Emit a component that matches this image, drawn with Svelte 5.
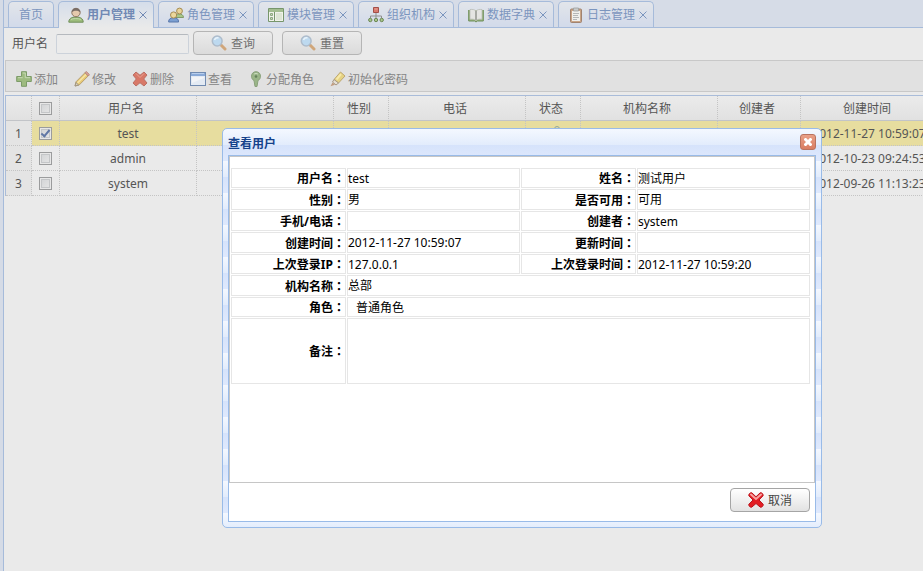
<script>
  const tabs = [
    { title: "用户管理", icon: "user" },
    { title: "角色管理", icon: "group" },
    { title: "模块管理", icon: "module" },
    { title: "组织机构", icon: "org" },
    { title: "数据字典", icon: "book" },
    { title: "日志管理", icon: "log" },
  ];
  let current = $state("用户管理");

  const tools = [
    { text: "添加", icon: "add" },
    { text: "修改", icon: "edit" },
    { text: "删除", icon: "remove" },
    { text: "查看", icon: "view" },
    { text: "分配角色", icon: "pin" },
    { text: "初始化密码", icon: "marker" },
  ];

  const columns = [
    { title: "用户名", size: "wide" },
    { title: "姓名", size: "wide" },
    { title: "性别", size: "narrow" },
    { title: "电话", size: "wide" },
    { title: "状态", size: "narrow" },
    { title: "机构名称", size: "wide" },
    { title: "创建者", size: "middle" },
    { title: "创建时间", size: "wide" },
  ];

  let rows = $state([
    { name: "test", created: "2012-11-27 10:59:07", checked: true },
    { name: "admin", created: "2012-10-23 09:24:53", checked: false },
    { name: "system", created: "2012-09-26 11:13:23", checked: false },
  ]);

  const details = [
    ["用户名", "test", "姓名", "测试用户"],
    ["性别", "男", "是否可用", "可用"],
    ["手机/电话", "", "创建者", "system"],
    ["创建时间", "2012-11-27 10:59:07", "更新时间", ""],
    ["上次登录IP", "127.0.0.1", "上次登录时间", "2012-11-27 10:59:20"],
  ];

  let keyword = $state("");
  let open = $state(true);
</script>

{#snippet icon(name)}
  <svg class="icon" viewBox="0 0 16 16" width="16" height="16" aria-hidden="true">
    {#if name === "user"}
      <path d="M.8 15.2c0-3.500 2.500-5.200 7.200-5.200s7.200 1.700 7.200 5.200z" fill="#9dbd7c" stroke="#718f5b" />
      <path d="M3 12.500c1.500-1.200 8-1.200 10 0" fill="none" stroke="#c4d9ae" />
      <circle cx="8" cy="5.500" r="4.200" fill="#e5c9ad" stroke="#8f7866" />
      <path d="M3.800 5.500C3.500-.5 12.500-.5 12.200 5.500 11 3.300 5 3.300 3.800 5.500z" fill="#796d66" />
    {:else if name === "group"}
      <path d="M7 10.500c0-3 1.500-3.500 4-3.500s4.500 1 4.500 3.500z" fill="#a9c789" stroke="#819b68" />
      <circle cx="11.500" cy="4" r="2.900" fill="#e8d398" stroke="#a68c52" />
      <path d="M.6 15c0-3.200 2-4.300 5-4.300s5 1.100 5 4.300z" fill="#7b9fd2" stroke="#5877aa" />
      <circle cx="5.600" cy="8" r="3.100" fill="#ecd79c" stroke="#a68c52" />
    {:else if name === "module"}
      <path d="M.5 1.500h15v13H.5z" fill="#f0f2ea" stroke="#77966c" />
      <path d="M1 2h14v3H1z" fill="#a3bd90" />
      <path d="M6.500 5v9" stroke="#77966c" />
      <path d="M2.500 6.500h2v2h-2zM2.500 10.500h2v2h-2z" fill="#c6d7b7" stroke="#8fa982" />
      <path d="M8 6h6v7H8z" fill="#dde5d4" />
    {:else if name === "org"}
      <path d="M8 6v3M2.500 11V9h11v2M8 9v2" fill="none" stroke="#8f8f8f" />
      <path d="M5.500.500h5v5h-5z" fill="#d8796d" stroke="#a34f48" />
      <path d="M6.500 1.500h3v1h-3z" fill="#eca99d" />
      <g fill="#a9c58c" stroke="#6c8855">
        <circle cx="2.300" cy="13" r="1.700" /><circle cx="8" cy="13" r="1.700" /><circle cx="13.700" cy="13" r="1.700" />
      </g>
    {:else if name === "book"}
      <path d="M.7 3v11h6l1.300 1 1.300-1h6V3" fill="#9ab47e" stroke="#6f8f5a" />
      <path d="M2 2.500c2.500-.3 4.500 0 6 1.500 1.500-1.500 3.500-1.800 6-1.500v9.700c-2.500-.2-4.500 0-6 1.300-1.500-1.300-3.500-1.500-6-1.300z" fill="#e4e5e2" stroke="#b5b8b1" stroke-width=".7" />
      <path d="M8 4v9" stroke="#a6a9a3" stroke-width="2" />
    {:else if name === "log"}
      <rect x="2.500" y="2" width="11" height="13.500" rx="1" fill="#c9a587" stroke="#a18370" />
      <path d="M4 4h8v10H4z" fill="#f0f0ed" />
      <path d="M5.500 1h5v3h-5z" fill="#c9cbcb" stroke="#9c9f9f" stroke-width=".8" />
      <path d="M5 6.500h6M5 8.500h5M5 10.500h6M5 12.500h4" stroke="#b5b7b7" />
    {:else if name === "add"}
      <path d="M5.500.700h5v4.800h4.800v5h-4.800v4.800h-5v-4.800H.7v-5h4.800z" fill="#9dbb7f" stroke="#7c9b68" />
      <path d="M6.700 2h2.600v4.700H14M2 6.700h4.700" fill="none" stroke="#c6d9b3" />
    {:else if name === "edit"}
      <path d="M1 15l1-4.200L11 1.700l3.200 3.200L5.200 14z" fill="#e9ca75" stroke="#b79f71" />
      <path d="M3.500 12L12 3.500" stroke="#f5e5a9" stroke-width="1.500" />
      <path d="M11 1.700l1.300-1.200 3.200 3.200L14.200 5z" fill="#dba096" stroke="#b68a7e" />
      <path d="M1 15l1-3.500L4.600 14z" fill="#ddd0bb" stroke="#8d867a" stroke-width=".7" />
    {:else if name === "remove"}
      <path d="M4 1l4 3.300L12 1l3 3-3.300 4L15 12l-3 3-4-3.300L4 15l-3-3 3.300-4L1 4z" fill="#d87867" stroke="#bb6f64" stroke-linejoin="round" />
      <path d="M4 2.500l4 4 4-4" fill="none" stroke="#e9a394" />
    {:else if name === "view"}
      <rect x=".500" y="1.500" width="15" height="13" fill="#e3eaf3" stroke="#718bb0" />
      <path d="M1 2h14v3H1z" fill="#8aaad8" />
      <path d="M2 2.500h12" stroke="#b8ceec" />
      <path d="M2 6h12v1L2 12z" fill="#f2f4f7" />
    {:else if name === "pin"}
      <path d="M7 15.500L6 9.500C4.500 8.800 3.500 7.200 3.500 5.200 3.500 2.500 5.400.7 8 .7s4.500 1.800 4.500 4.500c0 2-1 3.600-2.500 4.300l-1 6z" fill="#9ab588" stroke="#8aa17c" />
      <path d="M6 3.200c1-1 3-1 4 0" fill="none" stroke="#c9dabd" />
      <circle cx="8" cy="5.500" r="1.300" fill="#64815a" />
    {:else if name === "marker"}
      <path d="M4 8.500L10.500 1 15 5 8.500 12z" fill="#e6d383" stroke="#bda773" />
      <path d="M6.500 8.500L11 3.200" stroke="#f7e9a8" stroke-width="2" />
      <path d="M4 8.500L8.500 12 6 14 2.500 11z" fill="#e5dfd4" stroke="#a79883" />
      <path d="M2.500 11.500L5 13.700.5 15.300z" fill="#c09b7e" />
    {:else if name === "search"}
      <path d="M10 10l4 4" stroke="#d0a67a" stroke-width="3" stroke-linecap="round" />
      <circle cx="6.200" cy="6" r="4.900" fill="#bdd9ef" stroke="#aebccb" stroke-width="1.500" />
      <path d="M3.500 5c.5-1.800 2-2.500 4-2" fill="none" stroke="#eaf4fb" stroke-width="1.500" />
    {:else if name === "cancel"}
      <path d="M3.800.8L8 4.800 12.200.8c1.500-.5 3.200 1.200 2.900 2.900L11 8l4.200 4.300c.3 1.700-1.400 3.300-2.900 2.900L8 11.500l-4.300 3.700C2.200 15.600.5 14 .8 12.300L5 8 .8 3.700C.5 2 2.300.3 3.800.8z" fill="#e31e24" stroke="#b9141c" />
      <path d="M3 2.500l5 4.500 5-4.500" fill="none" stroke="#f8a2a0" stroke-width="2" stroke-linecap="round" />
    {:else if name === "enabled"}
      <circle cx="12" cy="3" r="2.500" fill="none" stroke="#8fa69d" />
      <path d="M3 14l7-9" stroke="#8fa69d" stroke-width="2" />
    {/if}
  </svg>
{/snippet}

{#snippet cross()}
  <svg viewBox="0 0 8 8" width="8" height="8" aria-hidden="true">
    <path d="M.5.5l7 7M7.500.500l-7 7" stroke="currentColor" />
  </svg>
{/snippet}

<div class="page">
  <main>
    <nav class="tabs">
      <div class="tab home"><button type="button">首页</button></div>
      {#each tabs as tab}
        <div class="tab" class:selected={tab.title === current}>
          <button type="button" class="tab-title" onclick={() => (current = tab.title)}>
            {@render icon(tab.icon)}{tab.title}
          </button>
          <button type="button" class="tab-close" aria-label="关闭">{@render cross()}</button>
        </div>
      {/each}
    </nav>

    <form class="search" onsubmit={(e) => e.preventDefault()}>
      <label for="keyword">用户名</label>
      <input id="keyword" type="text" bind:value={keyword} />
      <button type="submit" class="btn">{@render icon("search")}<span>查询</span></button>
      <button type="reset" class="btn">{@render icon("search")}<span>重置</span></button>
    </form>

    <div class="toolbar">
      {#each tools as tool}
        <button type="button">{@render icon(tool.icon)}<span>{tool.text}</span></button>
      {/each}
    </div>

    <div class="grid">
      <table>
        <colgroup>
          <col class="number" />
          <col class="check" />
          {#each columns as column}
            <col class={column.size} />
          {/each}
        </colgroup>
        <thead>
          <tr>
            <th></th>
            <th class="tick"><input type="checkbox" aria-label="全选" /></th>
            {#each columns as column}
              <th class="title">{column.title}</th>
            {/each}
          </tr>
        </thead>
        <tbody>
          {#each rows as row, i}
            <tr class:checked={row.checked}>
              <td class="rownum">{i + 1}</td>
              <td class="tick"><input type="checkbox" aria-label={row.name} bind:checked={row.checked} /></td>
              <td>{row.name}</td>
              <td></td>
              <td></td>
              <td></td>
              <td>{@render icon("enabled")}</td>
              <td></td>
              <td></td>
              <td>{row.created}</td>
            </tr>
          {/each}
        </tbody>
      </table>
    </div>
  </main>

  {#if open}
    <section class="window" role="dialog" aria-labelledby="window-title">
      <header>
        <h2 id="window-title">查看用户</h2>
        <button type="button" class="window-close" aria-label="关闭" onclick={() => (open = false)}>
          {@render cross()}
        </button>
      </header>
      <div class="window-body">
        <div class="content">
          <table class="details">
            <colgroup>
              <col class="label" /><col /><col class="label" /><col />
            </colgroup>
            <tbody>
              {#each details as [label1, value1, label2, value2]}
                <tr>
                  <th>{label1}<span class="colon">：</span></th>
                  <td>{value1}</td>
                  <th>{label2}<span class="colon">：</span></th>
                  <td>{value2}</td>
                </tr>
              {/each}
              <tr>
                <th>机构名称<span class="colon">：</span></th>
                <td colspan="3">总部</td>
              </tr>
              <tr>
                <th>角色<span class="colon">：</span></th>
                <td colspan="3" class="roles">普通角色</td>
              </tr>
              <tr class="remark">
                <th>备注<span class="colon">：</span></th>
                <td colspan="3"></td>
              </tr>
            </tbody>
          </table>
        </div>
        <footer>
          <button type="button" class="btn cancel" onclick={() => (open = false)}>
            {@render icon("cancel")}<span>取消</span>
          </button>
        </footer>
      </div>
    </section>
  {/if}
</div>

<style>
  :global(body) {
    margin: 0;
    background: #eaeaea;
  }

  .page {
    position: relative;
    box-sizing: border-box;
    min-height: 100vh;
    padding-left: 3px;
    overflow: hidden;
    background: #d5dbe6;
    font: 12px/16px "Noto Sans", "Noto Sans CJK SC", sans-serif;
    color: #555;
  }

  main {
    min-height: 100vh;
    border-left: 1px solid #a6bbda;
    background: #eaeaea;
  }

  button {
    display: flex;
    align-items: center;
    padding: 0;
    border: 0;
    background: none;
    color: inherit;
    font: inherit;
    white-space: nowrap;
    cursor: pointer;
  }

  svg {
    display: block;
    flex: none;
  }

  /* tabs */
  .tabs {
    display: flex;
    gap: 4px;
    box-sizing: border-box;
    height: 28px;
    padding: 1px 4px 0;
    border-bottom: 1px solid #a6bbda;
    background: #d6dce7;
  }

  .tab {
    display: flex;
    flex: none;
    align-items: center;
    gap: 4px;
    box-sizing: border-box;
    height: 26px;
    padding: 0 6px 0 9px;
    border: 1px solid #a6bbda;
    border-bottom: 0;
    border-radius: 5px 5px 0 0;
    background: linear-gradient(#e2e5ea, #d2daea);
    color: #7b95be;
  }

  .tab.home {
    padding: 0 10px;
  }

  .tab.selected {
    height: 27px;
    background: linear-gradient(#d5ddea, #eaeaea);
    color: #7189b4;
    font-weight: bold;
  }

  .tab-title {
    gap: 3px;
  }

  /* search form */
  .search {
    display: flex;
    align-items: center;
    height: 32px;
    padding: 0 8px;
  }

  .search label {
    margin-right: 8px;
  }

  .search input {
    box-sizing: border-box;
    width: 133px;
    height: 20px;
    margin-right: 4px;
    padding: 0 3px;
    border: 1px solid #ccd2da;
    border-top-color: #b5b9be;
    border-radius: 2px;
    background: #ebebeb;
    font: inherit;
  }

  .btn {
    justify-content: center;
    gap: 4px;
    box-sizing: border-box;
    width: 80px;
    height: 24px;
    border: 1px solid #b5b5b5;
    border-radius: 4px;
    background: linear-gradient(#ebebeb, #dbdbdb);
    color: #707070;
  }

  .btn span,
  .toolbar span {
    padding-top: 2px;
  }

  .search .btn {
    margin: 0 9px 2px 0;
  }

  /* toolbar */
  .toolbar {
    display: flex;
    align-items: center;
    gap: 16px;
    height: 30px;
    margin-left: 1px;
    padding: 0 10px;
    border: 1px solid #c8c8c8;
    border-right: 0;
    background: #e1e1e1;
    color: #858585;
  }

  .toolbar button {
    gap: 2px;
    padding-top: 5px;
  }

  /* user grid */
  .grid {
    margin: 3px 0 0 1px;
    overflow: hidden;
    border: 1px solid #a9bcd9;
    border-width: 1px 0 0 1px;
  }

  .grid table {
    width: 932px;
    table-layout: fixed;
    border-spacing: 0;
  }

  .number {
    width: 26px;
  }

  .check {
    width: 28px;
  }

  .wide {
    width: 137px;
  }

  .middle {
    width: 83px;
  }

  .narrow {
    width: 55px;
  }

  .grid th,
  .grid td {
    box-sizing: border-box;
    height: 25px;
    padding: 2px 0 0;
    border-right: 1px dotted #c4c4c4;
    border-bottom: 1px dotted #c4c4c4;
    font-weight: normal;
    text-align: center;
    white-space: nowrap;
  }

  .grid th {
    border-bottom: 1px solid #c2c4c8;
    background: linear-gradient(#ebebeb, #e1e1e1);
  }

  .grid th.title {
    padding-right: 4px;
  }

  .grid .tick {
    padding: 0;
  }

  .grid .checked td {
    background: #e7dd9f;
  }

  .grid td.rownum {
    background: #e4e4e4;
  }

  .grid .icon {
    margin: 0 auto;
  }

  .grid input {
    display: block;
    box-sizing: border-box;
    width: 13px;
    height: 13px;
    margin: 0 auto;
    border: 1px solid #9b9c9d;
    appearance: none;
    background: linear-gradient(135deg, #d0d2d4, #e7e7e7);
    box-shadow: inset 0 0 0 1px #e7e7e7, inset 0 0 0 2px #c4c6c8;
  }

  .grid input:checked::after {
    content: "";
    display: block;
    box-sizing: border-box;
    width: 5px;
    height: 9px;
    margin: 0 auto;
    border: solid #6077a5;
    border-width: 0 2px 2px 0;
    transform: rotate(40deg);
  }

  /* window */
  .window {
    position: absolute;
    top: 128px;
    left: 222px;
    box-sizing: border-box;
    width: 600px;
    padding: 0 5px 5px;
    border: 1px solid #99bbe8;
    border-radius: 5px;
    background: repeating-linear-gradient(#f4f8ff 0, #e2ecfc 16px, #d6e3fb 16px, #dfe9fd 32px);
    color: #000;
  }

  .window header {
    display: flex;
    align-items: center;
    justify-content: space-between;
    height: 26px;
  }

  .window h2 {
    margin: 4px 0 0;
    color: #15428b;
    font-size: 12px;
  }

  .window-close {
    justify-content: center;
    box-sizing: border-box;
    width: 16px;
    height: 16px;
    border: 1px solid #b9735f;
    border-radius: 3px;
    background: linear-gradient(#e9a087, #d97d62);
    color: #fff;
  }

  .window-close svg {
    stroke-width: 3;
  }

  .window-body {
    border: 1px solid #99bbe8;
    background: #fff;
  }

  .content {
    box-sizing: border-box;
    min-height: 327px;
    padding: 10px 3px 0 0;
    border: 1px solid #c6c6c6;
  }

  .details {
    width: 100%;
    table-layout: fixed;
    border-spacing: 1px;
  }

  .details .label {
    width: 115px;
  }

  .details th,
  .details td {
    box-sizing: border-box;
    height: 20px;
    padding: 1px 0 0;
    border: 1px solid #e6e6e6;
    text-align: left;
  }

  .details th {
    text-align: right;
  }

  .details tr:nth-child(even) > * {
    height: 21px;
  }

  .details tr.remark > * {
    height: 66px;
  }

  .details td.roles {
    padding-left: 8px;
  }

  .colon {
    font-family: "Noto Sans CJK TC", sans-serif;
  }

  .window footer {
    display: flex;
    justify-content: flex-end;
    padding: 5px 5px 9px;
  }

  .cancel {
    border-color: #a5a5a5;
    background: linear-gradient(#fff, #e2e2e2);
    color: #444;
  }
</style>
